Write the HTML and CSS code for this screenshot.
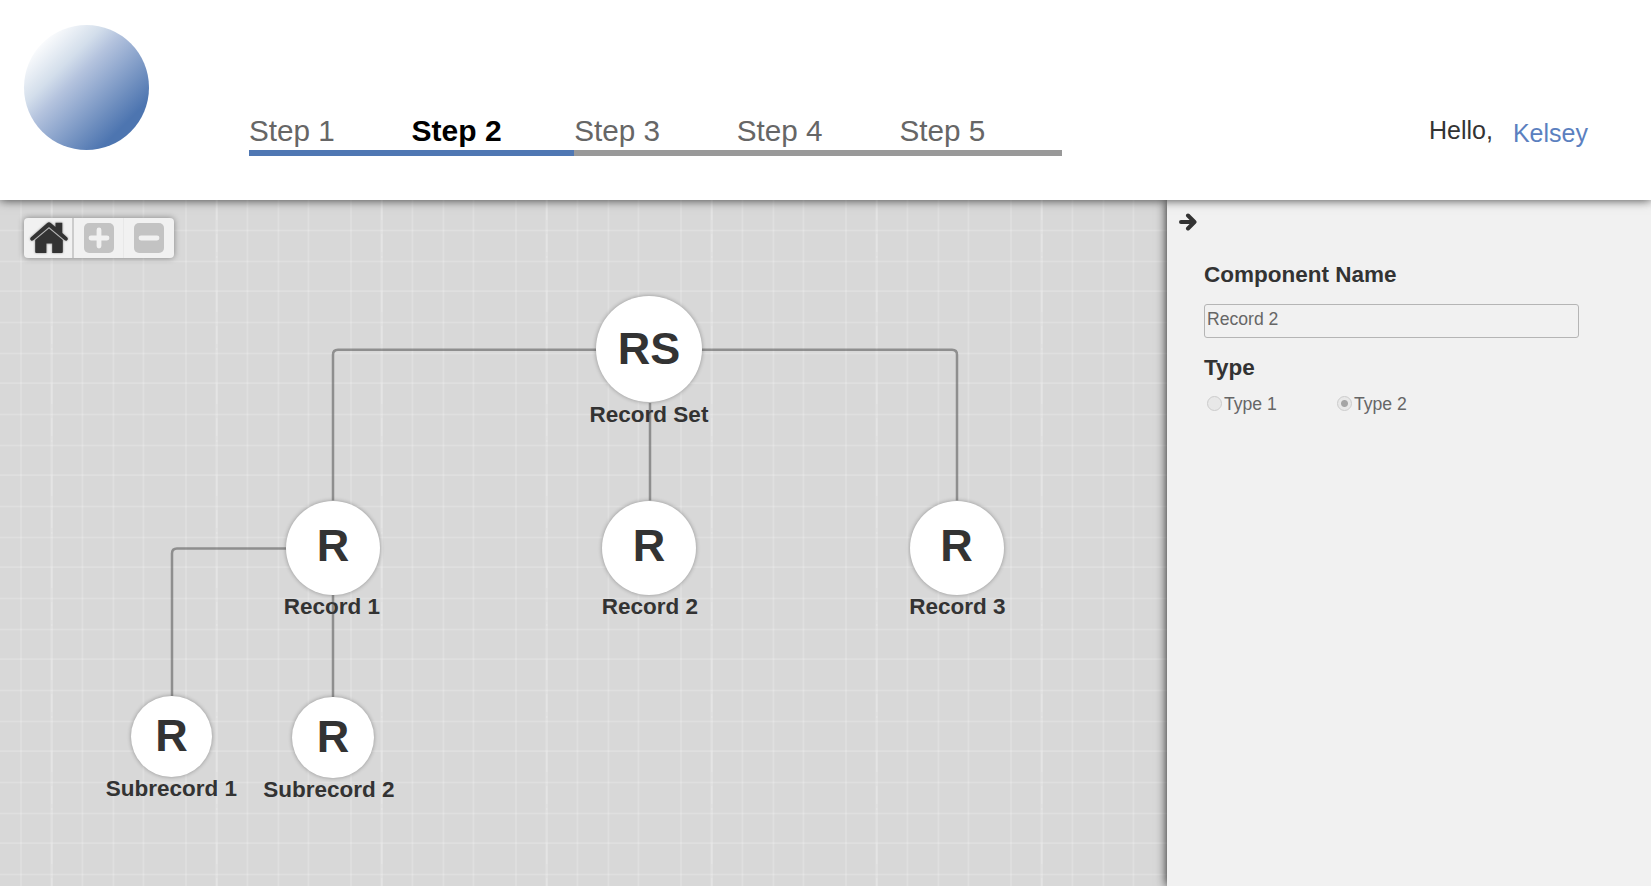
FILE: index.html
```html
<!DOCTYPE html>
<html lang="en">
<head>
<meta charset="utf-8">
<title>Record Set</title>
<link rel="stylesheet" href="styles.css">
</head>
<body>
<header class="header">
  <div class="logo"></div>
  <nav class="steps">
    <a class="step done">Step 1</a>
    <a class="step done current">Step 2</a>
    <a class="step">Step 3</a>
    <a class="step">Step 4</a>
    <a class="step">Step 5</a>
  </nav>
  <div class="user"><span>Hello,</span><a class="user-name">Kelsey</a></div>
</header>
<main class="workspace">
  <section class="canvas">
    <svg class="grid" width="100%" height="100%">
      <defs>
        <pattern id="cols" width="165" height="92" patternUnits="userSpaceOnUse">
          <path class="fine" d="M21 0V92M82.5 0V92M113.5 0V92M143.5 0V92"/>
          <path class="bold" d="M51.7 0V92"/>
          <path class="dash" d="M51.7 0V20M51.7 34V52M51.7 56V58"/>
        </pattern>
        <pattern id="rows" width="165" height="92" patternUnits="userSpaceOnUse">
          <path class="fine" d="M0 30.5H165M0 61.5H165M0 91.2H165"/>
        </pattern>
      </defs>
      <rect width="100%" height="100%" fill="url(#cols)"/>
      <rect width="100%" height="100%" fill="url(#rows)"/>
    </svg>
    <div class="toolbar">
      <button class="tool home" aria-label="Home">
        <svg width="38" height="32" viewBox="0 0 38 32"><path d="M17.200 1Q19 -.4 20.800 1L25.500 5V.8H32.300V11L37.300 15.500Q38.600 17.500 36.800 18.500Q35.800 19 34.800 18.200L19 5L3.200 18.200Q2.200 19 1.200 18.500Q-.6 17.500 .7 15.500Z"/><path d="M19 6.500L32.800 18V30Q32.800 31 31.800 31H22.200V21.500H16.400V31H6.200Q5.200 31 5.200 30V18Z"/></svg>
      </button>
      <button class="tool zoom-in" aria-label="Zoom in"><svg width="30" height="30"><rect width="30" height="30" rx="5"/><path class="sign" d="M7 15H23M15 7V23"/></svg></button>
      <button class="tool zoom-out" aria-label="Zoom out"><svg width="30" height="30"><rect width="30" height="30" rx="5"/><path class="sign" d="M7 15H23"/></svg></button>
    </div>
    <div class="node root"><div class="disc">RS</div><div class="label">Record Set</div></div>
    <div class="node record r1"><div class="disc">R</div><div class="label">Record 1</div></div>
    <div class="node record r2"><div class="disc">R</div><div class="label">Record 2</div></div>
    <div class="node record r3"><div class="disc">R</div><div class="label">Record 3</div></div>
    <div class="node sub s1"><div class="disc">R</div><div class="label">Subrecord 1</div></div>
    <div class="node sub s2"><div class="disc">R</div><div class="label">Subrecord 2</div></div>
    <svg class="links" width="1167" height="686">
      <path d="M596 149.800H338Q333 149.800 333 154.800V300.500M702 149.800H952Q957 149.800 957 154.800V300.500M650 203V300.500M333 395V497M286 348.500H177Q172 348.500 172 353.500V496"/>
    </svg>
  </section>
  <aside class="panel">
    <svg class="collapse" width="19" height="18" viewBox="0 0 19 18"><path d="M2 9H15M9 2.500L15.500 9L9 15.500"/></svg>
    <h2>Component Name</h2>
    <div class="field">Record 2</div>
    <h2 class="type-title">Type</h2>
    <div class="options">
      <label class="option"><span class="radio"></span>Type 1</label>
      <label class="option"><span class="radio checked"></span>Type 2</label>
    </div>
  </aside>
</main>
</body>
</html>
```
FILE: styles.css
```css
* { box-sizing: border-box; }
body {
  margin: 0;
  width: 1651px;
  height: 886px;
  overflow: hidden;
  display: flex;
  flex-direction: column;
  font-family: "Liberation Sans", Arial, sans-serif;
  color: #333;
}
.header {
  flex: none;
  height: 200px;
  display: flex;
  padding-left: 24px;
  background: #fff;
  box-shadow: 0 0 10px rgba(0, 0, 0, .75);
  position: relative;
  z-index: 3;
}
.logo {
  width: 125px;
  height: 125px;
  margin-top: 25px;
  border-radius: 50%;
  background: linear-gradient(135deg, #fff 12%, #d3deeb 32%, #b4c3de 42%, #4d75b0 80%);
}
.steps { display: flex; width: 813px; margin: 111px 0 0 100px; height: 45px; }
.step {
  flex: 1;
  border-bottom: 6px solid #999;
  font-size: 29.7px;
  line-height: 39px;
  color: #666;
}
.step.done { border-color: #4f77b3; }
.step.current { color: #000; font-weight: bold; font-size: 30px; }
.user {
  display: flex;
  margin: 116px 0 0 367px;
  font-size: 25px;
  line-height: 29px;
}
.user-name { margin: 3px 0 0 20px; color: #5b80bf; }
.workspace { flex: 1; display: flex; min-height: 0; }
.canvas { position: relative; width: 1167px; background: #d8d8d8; }
.grid { position: absolute; inset: 0; }
.grid path { fill: none; stroke: #fff; stroke-width: 1.7; }
.grid .fine { stroke-opacity: .18; }
.grid .bold { stroke-opacity: .2; stroke-width: 2.3; }
.grid .dash { stroke-opacity: .13; }
.toolbar {
  position: absolute;
  left: 24px;
  top: 18px;
  width: 150px;
  height: 40px;
  display: flex;
  border-radius: 4px;
  background: #f1f1f1;
  box-shadow: 0 0 6px rgba(0, 0, 0, .4);
}
.tool {
  flex: 1;
  display: flex;
  align-items: center;
  justify-content: center;
  padding: 0;
  border: 0;
  background: none;
}
.tool.home { flex: 0 0 50px; border-right: 2px solid #ccc; padding-left: 2px; }
.tool.zoom-in { border-right: 1px solid #e8e8e8; }
.tool.zoom-out { padding-right: 1px; }
.tool svg { flex: none; fill: #c3c3c3; }
.tool.home svg { fill: #333; filter: drop-shadow(0 0 1px rgba(0, 0, 0, .4)); }
.tool .sign { stroke: #f1f1f1; stroke-width: 4.800; stroke-linecap: round; }
.node {
  position: absolute;
  width: 160px;
  display: flex;
  flex-direction: column;
  align-items: center;
}
.disc {
  flex: none;
  display: flex;
  align-items: center;
  justify-content: center;
  border-radius: 50%;
  background: #fff;
  box-shadow: 0 0 4px rgba(0, 0, 0, .33);
  font-size: 45px;
  line-height: 50px;
  font-weight: bold;
}
.label { font-size: 22.5px; line-height: 26px; font-weight: bold; white-space: nowrap; }
.root { left: 569px; top: 96px; }
.root .disc { width: 106px; height: 106px; padding-bottom: 1px; }
.record { top: 300.5px; }
.record .disc { width: 94px; height: 94px; padding-bottom: 3px; }
.record .label { line-height: 24px; }
.r1 { left: 253px; }
.r1 .label { margin-right: 2px; }
.r2 { left: 569px; }
.r2 .label { margin-left: 2px; }
.r3 { left: 876.5px; }
.r3 .label { margin-left: 2px; }
.sub .disc { width: 81.500px; height: 81.500px; padding-bottom: 1px; }
.sub .label { line-height: 24px; }
.s1 { left: 91.500px; top: 495.500px; }
.s2 { left: 253px; top: 496.500px; }
.s2 .label { margin-right: 8px; }
.links { position: absolute; left: 0; top: 0; fill: none; stroke: rgba(68, 68, 68, .5); stroke-width: 2.5; }
.panel {
  flex: 1;
  position: relative;
  z-index: 2;
  padding: 13px 72px 0 37px;
  background: #f1f1f1;
  box-shadow: 0 0 10px rgba(0, 0, 0, .9);
}
.collapse { display: block; margin-left: -25px; fill: none; stroke: #333; stroke-width: 4; stroke-linecap: round; stroke-linejoin: round; }
h2 { margin: 31px 0 0; font-size: 22.5px; line-height: 26px; }
.field {
  height: 34px;
  margin-top: 16px;
  padding-left: 2px;
  border: 1px solid #b5b5b5;
  border-radius: 3px;
  font-size: 17.6px;
  line-height: 29px;
  color: #666;
}
.type-title { margin-top: 17px; }
.options { display: flex; margin-top: 13px; padding-left: 3px; }
.option { display: flex; width: 130px; font-size: 17.6px; line-height: 21px; color: #666; }
.radio {
  width: 15px;
  height: 15px;
  margin: 2px 2px 0 0;
  border: 1px solid #ccc;
  border-radius: 50%;
  background: #e8e8e8;
}
.radio.checked { background: radial-gradient(circle, #a5a5a5 3px, #e8e8e8 4px); }
```
